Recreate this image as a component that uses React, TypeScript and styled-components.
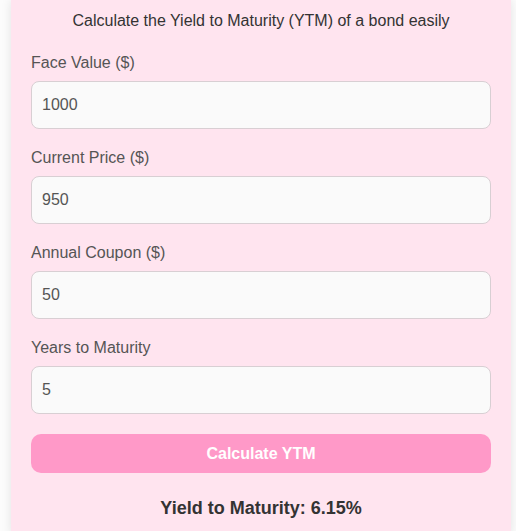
import React, { useState } from "react";
import styled, { createGlobalStyle } from "styled-components";

const GlobalStyle = createGlobalStyle`
  html, body {
    margin: 0;
    padding: 0;
    background: #fcfcfc;
    font-family: "Liberation Sans", Arial, sans-serif;
  }
`;

const Page = styled.div`
  padding: 0 5px 0 11px;
`;

const Card = styled.div`
  box-sizing: border-box;
  width: 500px;
  background: #ffe4ef;
  padding: 12px 20px 16px;
  box-shadow: 0 0 10px rgba(0, 0, 0, 0.1);
`;

const Subtitle = styled.p`
  margin: 0 0 24px;
  text-align: center;
  font-size: 16px;
  line-height: 18px;
  color: #333;
`;

const Field = styled.div<{ $last?: boolean }>`
  margin-bottom: ${(p) => (p.$last ? "0" : "20px")};
`;

const Label = styled.label`
  display: block;
  font-size: 16px;
  line-height: 18px;
  margin-bottom: 9px;
  color: #555;
`;

const Input = styled.input`
  box-sizing: border-box;
  display: block;
  width: 100%;
  height: 48px;
  padding: 0 10px;
  border: 1px solid #d8cfd3;
  border-radius: 8px;
  background: #fafafa;
  font-family: "Liberation Sans", Arial, sans-serif;
  font-size: 16px;
  color: #555;
  outline: none;
`;

const Button = styled.button`
  display: block;
  width: 100%;
  height: 39px;
  margin-top: 20px;
  border: none;
  border-radius: 10px;
  background: #ff99c8;
  color: #fff;
  font-family: "Liberation Sans", Arial, sans-serif;
  font-size: 16px;
  font-weight: bold;
  cursor: pointer;
`;

const Result = styled.h3`
  margin: 24px 0 0;
  text-align: center;
  font-size: 18px;
  line-height: 22px;
  font-weight: bold;
  color: #333;
`;

const fields = [
  { label: "Face Value ($)", value: "1000" },
  { label: "Current Price ($)", value: "950" },
  { label: "Annual Coupon ($)", value: "50" },
  { label: "Years to Maturity", value: "5" },
];

export default function App() {
  const [values, setValues] = useState(fields.map((f) => f.value));
  return (
    <Page>
      <GlobalStyle />
      <Card>
        <Subtitle>Calculate the Yield to Maturity (YTM) of a bond easily</Subtitle>
        {fields.map((f, i) => (
          <Field key={f.label} $last={i === fields.length - 1}>
            <Label>{f.label}</Label>
            <Input
              type="number"
              value={values[i]}
              onChange={(e) => {
                const next = [...values];
                next[i] = e.target.value;
                setValues(next);
              }}
            />
          </Field>
        ))}
        <Button>Calculate YTM</Button>
        <Result>Yield to Maturity: 6.15%</Result>
      </Card>
    </Page>
  );
}
